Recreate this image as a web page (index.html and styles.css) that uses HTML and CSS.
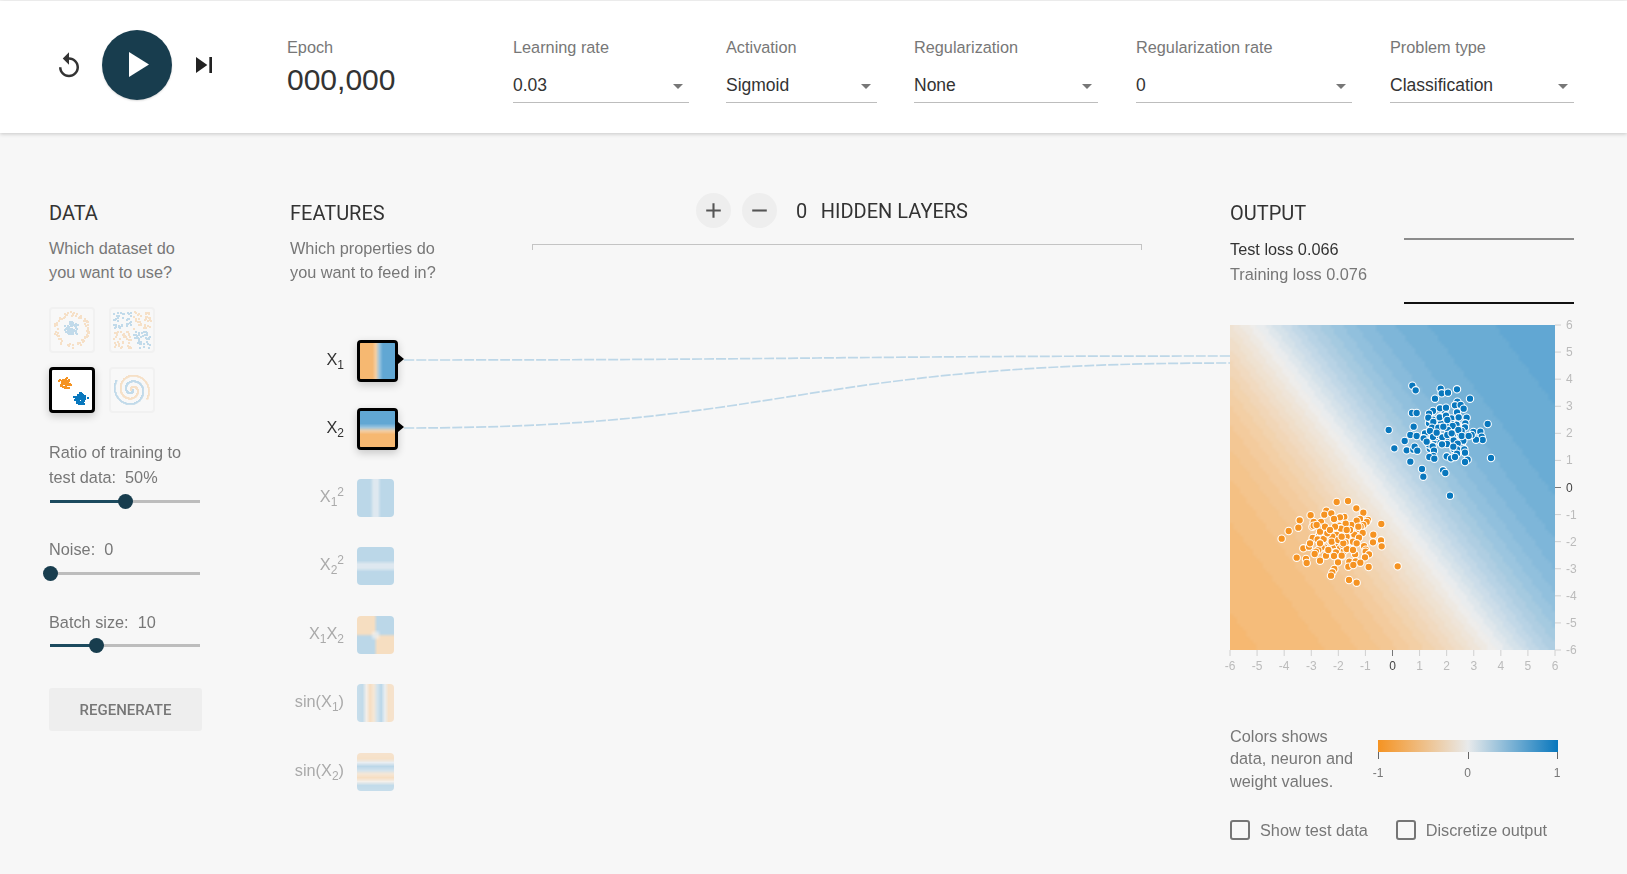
FILE: index.html
```html
<!DOCTYPE html>
<html lang="en">
<head>
    <meta charset="UTF-8">
    <title>Tensorflow Playground</title>
    <link rel="stylesheet" href="styles.css">
</head>
<body>
    <header class="top-bar">
        <svg class="icon-reset" viewBox="0 0 24 24"><path d="M12 5V1L7 6l5 5V7c3.31 0 6 2.69 6 6s-2.69 6-6 6-6-2.69-6-6H4c0 4.42 3.58 8 8 8s8-3.58 8-8-3.58-8-8-8z"/></svg>
        <div class="play-button">
            <svg viewBox="0 0 70 70"><path d="M27 22v25l20-12.500z"/></svg>
        </div>
        <svg class="icon-step" viewBox="0 0 24 24"><path d="M6 18l8.500-6L6 6v12zM16 6v12h2V6h-2z"/></svg>

        <div class="epoch">
            <div class="field-label">Epoch</div>
            <div class="epoch-value">000,000</div>
        </div>
        <div class="field field-rate">
            <div class="field-label">Learning rate</div>
            <div class="dropdown">0.03</div>
        </div>
        <div class="field field-activation">
            <div class="field-label">Activation</div>
            <div class="dropdown">Sigmoid</div>
        </div>
        <div class="field field-reg">
            <div class="field-label">Regularization</div>
            <div class="dropdown">None</div>
        </div>
        <div class="field field-regrate">
            <div class="field-label">Regularization rate</div>
            <div class="dropdown">0</div>
        </div>
        <div class="field field-problem">
            <div class="field-label">Problem type</div>
            <div class="dropdown">Classification</div>
        </div>
    </header>

    <main class="main">
        <svg class="links" width="1627" height="741" viewBox="0 133 1627 741">
            <path d="M404 360C817 360 817 356 1230 356"/>
            <path d="M404 428C790 428 790 363 1230 363"/>
        </svg>

        <section class="col-data">
            <h4 class="col-title">DATA</h4>
            <p class="col-desc">Which dataset do<br>you want to use?</p>
            <div class="thumbs">
                <canvas class="thumb" id="thumbCircle" width="42" height="42"></canvas>
                <canvas class="thumb" id="thumbXor" width="42" height="42"></canvas>
                <canvas class="thumb selected" id="thumbGauss" width="40" height="40"></canvas>
                <canvas class="thumb" id="thumbSpiral" width="42" height="42"></canvas>
            </div>
            <div class="ctrl ctrl-first">
                <div class="ctrl-label">Ratio of training to<br>test data:&nbsp; 50%</div>
                <div class="slider"><div class="slider-fill" style="width: 50.400%"></div><div class="slider-thumb"></div></div>
            </div>
            <div class="ctrl">
                <div class="ctrl-label">Noise:&nbsp; 0</div>
                <div class="slider"><div class="slider-fill" style="width: 0%"></div><div class="slider-thumb"></div></div>
            </div>
            <div class="ctrl ctrl-batch">
                <div class="ctrl-label">Batch size:&nbsp; 10</div>
                <div class="slider"><div class="slider-fill" style="width: 31%"></div><div class="slider-thumb"></div></div>
            </div>
            <button class="regenerate">REGENERATE</button>
        </section>

        <section class="col-features">
            <h4 class="col-title">FEATURES</h4>
            <p class="col-desc">Which properties do<br>you want to feed in?</p>
            <div class="features">
                <div class="feature active">
                    <div class="feature-label">X<sub>1</sub></div>
                    <div class="node"><canvas data-fn="x" width="10" height="10"></canvas></div>
                </div>
                <div class="feature active">
                    <div class="feature-label">X<sub>2</sub></div>
                    <div class="node"><canvas data-fn="y" width="10" height="10"></canvas></div>
                </div>
                <div class="feature">
                    <div class="feature-label">X<sub>1</sub><sup>2</sup></div>
                    <div class="node"><canvas data-fn="xx" width="10" height="10"></canvas></div>
                </div>
                <div class="feature">
                    <div class="feature-label">X<sub>2</sub><sup>2</sup></div>
                    <div class="node"><canvas data-fn="yy" width="10" height="10"></canvas></div>
                </div>
                <div class="feature">
                    <div class="feature-label">X<sub>1</sub>X<sub>2</sub></div>
                    <div class="node"><canvas data-fn="xy" width="10" height="10"></canvas></div>
                </div>
                <div class="feature">
                    <div class="feature-label">sin(X<sub>1</sub>)</div>
                    <div class="node"><canvas data-fn="sinx" width="10" height="10"></canvas></div>
                </div>
                <div class="feature">
                    <div class="feature-label">sin(X<sub>2</sub>)</div>
                    <div class="node"><canvas data-fn="siny" width="10" height="10"></canvas></div>
                </div>
            </div>
        </section>

        <section class="col-network">
            <div class="layers-row">
                <div class="round-button">
                    <svg viewBox="0 0 24 24"><path d="M19 13h-6v6h-2v-6H5v-2h6V5h2v6h6v2z"/></svg>
                </div>
                <div class="round-button">
                    <svg viewBox="0 0 24 24"><path d="M19 13H5v-2h14v2z"/></svg>
                </div>
                <span class="layers-count">0</span>
                <span class="layers-text">HIDDEN LAYERS</span>
            </div>
            <div class="bracket"></div>
        </section>

        <section class="col-output">
            <h4 class="col-title">OUTPUT</h4>
            <div class="loss-row">
                <div>
                    <div class="loss-test">Test loss 0.066</div>
                    <div class="loss-train">Training loss 0.076</div>
                </div>
                <div class="loss-chart">
                    <div class="loss-line-train"></div>
                    <div class="loss-line-test"></div>
                </div>
            </div>
            <div class="heatmap">
                <canvas id="heatCanvas" width="100" height="100"></canvas>
                <svg class="axes" id="axes" width="350" height="350"></svg>
                <svg class="points" id="points" width="325" height="325"></svg>
            </div>
            <div class="legend-row">
                <p class="legend-text">Colors shows<br>data, neuron and<br>weight values.</p>
                <div class="legend">
                    <div class="legend-bar"></div>
                    <div class="legend-ticks">
                        <div class="legend-tick"><span>-1</span></div>
                        <div class="legend-tick"><span>0</span></div>
                        <div class="legend-tick"><span>1</span></div>
                    </div>
                </div>
            </div>
            <div class="checks">
                <label class="check"><span class="check-box"></span>Show test data</label>
                <label class="check"><span class="check-box"></span>Discretize output</label>
            </div>
        </section>
    </main>

    <script src="script.js"></script>
</body>
</html>
```

FILE: styles.css
```css
* {
    box-sizing: border-box;
}
html, body {
    height: 100%;
}
body {
    margin: 0;
    padding-top: 1px;
    background-color: #F7F7F7;
    font-family: "Liberation Sans", Arial, sans-serif;
    font-size: 16.300px;
    color: #777777;
    overflow: hidden;
}
.top-bar {
    display: flex;
    align-items: flex-start;
    height: 132px;
    padding: 29px 0 0 54px;
    background-color: #FFFFFF;
    box-shadow: 0 1px 4px rgba(0, 0, 0, 0.2);
    position: relative;
}
.icon-reset {
    width: 30px;
    height: 30px;
    margin-top: 21px;
    fill: #333333;
}
.play-button {
    width: 70px;
    height: 70px;
    margin-left: 18px;
    border-radius: 50%;
    background-color: #183D4E;
    box-shadow: 0 1px 2px rgba(0, 0, 0, 0.15);
}
.play-button svg {
    display: block;
    fill: #FFFFFF;
}
.icon-step {
    width: 32px;
    height: 32px;
    margin: 19px 0 0 16px;
    fill: #222222;
}
.epoch {
    margin: 8px 0 0 67px;
    width: 226px;
}
.field-label {
    line-height: 18px;
    color: #777777;
}
.epoch-value {
    margin-top: 7px;
    font-size: 30px;
    line-height: 34px;
    color: #333333;
}
.field {
    margin-top: 8px;
}
.field-rate { width: 176px; }
.field-activation { width: 151px; margin-left: 37px; }
.field-reg { width: 184px; margin-left: 37px; }
.field-regrate { width: 216px; margin-left: 38px; }
.field-problem { width: 184px; margin-left: 38px; }
.dropdown {
    position: relative;
    margin-top: 14px;
    height: 33px;
    font-size: 17.500px;
    line-height: 30px;
    color: #333333;
    border-bottom: 1px solid #BDBDBD;
}
.dropdown::after {
    content: "";
    position: absolute;
    right: 6px;
    top: 14px;
    border-left: 5px solid transparent;
    border-right: 5px solid transparent;
    border-top: 5px solid #777777;
}

.main {
    position: relative;
    display: flex;
    align-items: flex-start;
    padding: 60px 0 0 49px;
}
.links {
    position: absolute;
    left: 0;
    top: 0;
    pointer-events: none;
}
.links path {
    fill: none;
    stroke: #BDD7E8;
    stroke-width: 1.700;
    stroke-dasharray: 10 2;
}
.col-data {
    width: 241px;
    padding-top: 8px;
}
.col-features {
    width: 242px;
    padding-top: 8px;
}
.col-network {
    width: 610px;
}
.col-output {
    width: 344px;
    margin-left: 88px;
    padding-top: 8px;
}
.col-title {
    margin: 0;
    font-family: Roboto, sans-serif;
    font-size: 20px;
    font-weight: 400;
    line-height: 24px;
    color: #333333;
}
.col-desc {
    margin: 12px 0 0;
    line-height: 23.500px;
}

.thumbs {
    display: grid;
    grid-template-columns: 46px 46px;
    gap: 14px;
    margin-top: 23px;
}
.thumb {
    display: block;
    width: 46px;
    height: 46px;
    background-color: #FFFFFF;
    border: 2px solid #DDDDDD;
    border-radius: 4px;
    opacity: 0.220;
}
.thumb.selected {
    opacity: 1;
    border: 3px solid #000000;
    box-shadow: 0 3px 8px rgba(0, 0, 0, 0.2);
}
.ctrl {
    width: 153px;
    margin-top: 25px;
}
.ctrl-first {
    margin-top: 27px;
}
.ctrl-batch {
    margin-top: 25.500px;
}
.ctrl-label {
    line-height: 25px;
}
.slider {
    position: relative;
    width: 150px;
    height: 22px;
    margin-left: 1px;
    background: linear-gradient(#BDBDBD, #BDBDBD) no-repeat 0 50% / 100% 3px;
}
.slider-fill {
    position: relative;
    height: 100%;
    background: linear-gradient(#1C4A5E, #1C4A5E) no-repeat 0 50% / 100% 3px;
}
.slider-thumb {
    position: absolute;
    top: 3.500px;
    width: 15px;
    height: 15px;
    margin-left: -7.500px;
    border-radius: 50%;
    background-color: #183D4E;
}
.slider-fill + .slider-thumb {
    left: 0;
}
.regenerate {
    display: block;
    width: 153px;
    height: 43px;
    margin-top: 31.500px;
    border: none;
    border-radius: 3px;
    background-color: #EEEEEE;
    font-family: Roboto, sans-serif;
    font-size: 15px;
    font-weight: 500;
    color: #777777;
}

.features {
    margin-top: 42.500px;
}
.feature {
    display: flex;
    align-items: center;
    gap: 13px;
    height: 68.500px;
    color: #AAAAAA;
}
.feature.active {
    color: #333333;
}
.feature-label {
    width: 54px;
    flex-shrink: 0;
    padding-bottom: 4px;
    text-align: right;
    white-space: nowrap;
    line-height: 20px;
}
.feature-label sub,
.feature-label sup {
    font-size: 12px;
    line-height: 0;
}
.node {
    position: relative;
    width: 37px;
    height: 38px;
}
.node canvas {
    display: block;
    width: 100%;
    height: 100%;
    border-radius: 4px;
    opacity: 0.400;
}
.feature.active .node {
    width: 41px;
    height: 42px;
    border: 3px solid #000000;
    border-radius: 4px;
    box-shadow: 0 3px 8px rgba(0, 0, 0, 0.2);
    background-color: #F7F7F7;
}
.feature.active .node canvas {
    opacity: 1;
    border-radius: 0;
}
.feature.active .node::after {
    content: "";
    position: absolute;
    left: 38px;
    top: 11px;
    border-top: 5px solid transparent;
    border-bottom: 5px solid transparent;
    border-left: 6px solid #000000;
}

.layers-row {
    display: flex;
    align-items: center;
    height: 35px;
    padding-left: 164px;
    font-family: Roboto, sans-serif;
    font-size: 20px;
    color: #333333;
}
.round-button {
    width: 35px;
    height: 35px;
    margin-right: 11px;
    padding: 5px;
    border-radius: 50%;
    background-color: #EEEEEE;
}
.round-button svg {
    display: block;
    fill: #555555;
}
.layers-count {
    margin-left: 8px;
}
.layers-text {
    margin-left: 13.500px;
}
.bracket {
    height: 6px;
    margin-top: 16px;
    border: 1px solid #C4C4C4;
    border-bottom: none;
}

.loss-row {
    display: flex;
    justify-content: space-between;
    margin-top: 11.500px;
    line-height: 25px;
}
.loss-test {
    color: #333333;
}
.loss-chart {
    display: flex;
    flex-direction: column;
    justify-content: space-between;
    width: 170px;
    height: 66px;
    margin-top: 1px;
}
.loss-line-train {
    height: 2px;
    background-color: #8C8C8C;
}
.loss-line-test {
    height: 2px;
    background-color: #111111;
}
.heatmap {
    position: relative;
    width: 325px;
    height: 325px;
    margin-top: 21px;
}
.heatmap canvas {
    display: block;
    width: 325px;
    height: 325px;
}
.axes,
.points {
    position: absolute;
    left: 0;
    top: 0;
    overflow: visible;
}
.axes text {
    font-size: 12px;
    fill: #BBBBBB;
}
.axes text.zero {
    fill: #444444;
}
.axes line {
    stroke: #D0D0D0;
}
.axes line.zero {
    stroke: #777777;
}
.legend-row {
    display: flex;
    margin-top: 75px;
}
.legend-text {
    width: 148px;
    margin: 0;
    line-height: 22.500px;
}
.legend {
    width: 180px;
    margin-top: 15px;
}
.legend-bar {
    height: 12px;
    background: linear-gradient(to right, #F59322, #E8EAEB 50%, #0877BD);
}
.legend-ticks {
    display: flex;
    justify-content: space-between;
}
.legend-tick {
    position: relative;
    width: 1px;
    height: 7px;
    background-color: #666666;
}
.legend-tick span {
    position: absolute;
    top: 14px;
    left: 0;
    transform: translateX(-50%);
    font-size: 12px;
    line-height: 14px;
    color: #777777;
}
.checks {
    display: flex;
    gap: 28px;
    margin-top: 27.500px;
}
.check {
    display: flex;
    align-items: center;
    gap: 10px;
    line-height: 20px;
}
.check-box {
    width: 20px;
    height: 20px;
    border: 2px solid #757575;
    border-radius: 3px;
}
```

FILE: script.js
```js
// Cores da escala -1 / 0 / 1
var ORANGE = [245, 147, 34];
var MID = [232, 234, 235];
var BLUE = [8, 119, 189];
var SHADES = 30;

function colorFor(v) {
    v = Math.max(-1, Math.min(1, v));
    // escala em faixas, igual ao desenho original
    v = (Math.round((v + 1) / 2 * (SHADES - 1)) / (SHADES - 1)) * 2 - 1;
    var from = v < 0 ? ORANGE : BLUE;
    var t = Math.abs(v);
    return [
        MID[0] + (from[0] - MID[0]) * t,
        MID[1] + (from[1] - MID[1]) * t,
        MID[2] + (from[2] - MID[2]) * t
    ];
}

function paint(canvas, fn) {
    var ctx = canvas.getContext('2d');
    var w = canvas.width, h = canvas.height;
    var img = ctx.createImageData(w, h);
    for (var j = 0; j < h; j++) {
        for (var i = 0; i < w; i++) {
            var x = (i + 0.5) / w * 12 - 6;
            var y = 6 - (j + 0.5) / h * 12;
            var c = colorFor(fn(x, y));
            var p = (j * w + i) * 4;
            img.data[p] = c[0];
            img.data[p + 1] = c[1];
            img.data[p + 2] = c[2];
            img.data[p + 3] = 160;
        }
    }
    ctx.putImageData(img, 0, 0);
}

var features = {
    x: function(x) { return x; },
    y: function(x, y) { return y; },
    xx: function(x) { return x * x; },
    yy: function(x, y) { return y * y; },
    xy: function(x, y) { return x * y; },
    sinx: function(x) { return Math.sin(x); },
    siny: function(x, y) { return Math.sin(y); }
};
document.querySelectorAll('.node canvas').forEach(function(c) {
    paint(c, features[c.dataset.fn]);
});

// Mapa de saida: fronteira diagonal, satura devagar
paint(document.getElementById('heatCanvas'), function(x, y) {
    var d = (x * 0.803 + y * 0.596 + 0.47) / 12 * 325;
    return Math.tanh(d / 95);
});

// Eixos
var SVGNS = 'http://www.w3.org/2000/svg';
function add(parent, name, attrs, text) {
    var el = document.createElementNS(SVGNS, name);
    for (var k in attrs) el.setAttribute(k, attrs[k]);
    if (text !== undefined) el.textContent = text;
    parent.appendChild(el);
    return el;
}
var axes = document.getElementById('axes');
for (var v = -6; v <= 6; v++) {
    var pos = (v + 6) * 325 / 12;
    var cls = v === 0 ? 'zero' : '';
    add(axes, 'line', { x1: pos, x2: pos, y1: 325, y2: 331, 'class': cls });
    add(axes, 'line', { x1: 325, x2: 331, y1: 325 - pos, y2: 325 - pos, 'class': cls });
    add(axes, 'text', { x: pos, y: 345, 'text-anchor': 'middle', 'class': cls }, v);
    add(axes, 'text', { x: 336, y: 325 - pos + 4, 'class': cls }, v);
}

var seed = 7;
function rnd() {
    seed = (seed * 16807) % 2147483647;
    return seed / 2147483647;
}
function gaussRnd() {
    return (rnd() + rnd() + rnd() - 1.5) / 1.5;
}

// Pontos do conjunto de dados, em coordenadas da imagem ampliada 3x
var bluePoints = [[607,227],[617,241],[692,236],[695,250],[714,248],[741,238],[675,266],[780,266],[742,275],[735,286],[752,285],[761,296],[690,295],[708,293],[669,303],[657,311],[655,323],[606,309],[620,309],[741,307],[746,322],[770,323],[689,322],[708,317],[712,330],[670,336],[728,348],[766,340],[765,352],[833,342],[611,350],[536,360],[666,353],[694,351],[714,360],[685,353],[645,370],[660,363],[755,363],[790,366],[811,365],[601,375],[620,378],[641,385],[697,382],[669,381],[712,375],[815,380],[818,390],[798,389],[760,392],[731,391],[584,393],[711,402],[696,403],[743,401],[656,403],[668,409],[553,415],[590,421],[610,419],[614,410],[622,422],[741,418],[763,418],[765,428],[672,422],[741,431],[670,438],[658,441],[673,446],[710,439],[723,445],[735,441],[773,449],[765,456],[843,444],[601,455],[636,477],[640,500],[699,481],[706,489],[720,557],[785,375],[745,360],[725,370],[680,368],[700,350],[650,395],[730,410],[755,378],[776,378]];
var orangePoints = [[380,576],[414,573],[349,602],[343,614],[364,610],[439,595],[460,608],[474,630],[470,636],[403,621],[390,622],[372,627],[450,627],[440,632],[269,631],[265,653],[311,636],[311,647],[333,636],[334,653],[320,645],[424,645],[407,641],[460,645],[452,650],[514,642],[236,663],[215,686],[393,656],[330,665],[458,669],[433,674],[490,674],[410,680],[380,675],[367,680],[308,684],[323,688],[341,687],[447,683],[407,697],[429,695],[365,695],[352,670],[513,691],[489,697],[515,709],[280,715],[297,710],[335,712],[325,720],[318,725],[410,717],[429,720],[378,727],[467,725],[477,733],[314,732],[348,737],[395,737],[372,738],[465,742],[260,743],[288,747],[290,759],[330,752],[384,757],[418,755],[437,754],[451,758],[415,770],[430,765],[476,771],[373,777],[367,787],[363,797],[563,769],[417,810],[440,818],[385,690],[345,650],[400,700],[440,700],[420,660],[375,650],[300,700],[355,720],[395,680],[445,650],[360,660],[330,700],[410,660]];
var pointsSvg = document.getElementById('points');
function drawPoint(x, y, color) {
    add(pointsSvg, 'circle', {
        cx: (x - 60) / 3,
        cy: (y - 45) / 3,
        r: 3.7,
        fill: color,
        stroke: '#FFFFFF',
        'stroke-width': 1.1
    });
}
function drawPoints(list, color, cx, cy, rx, ry) {
    // miolo mais denso do aglomerado, por baixo dos pontos medidos
    for (var i = 0; i < 40; i++) {
        drawPoint(cx + gaussRnd() * rx, cy + gaussRnd() * ry, color);
    }
    list.forEach(function(p) {
        drawPoint(p[0], p[1], color);
    });
}
drawPoints(orangePoints, '#F59322', 385, 685, 100, 80);
drawPoints(bluePoints, '#0877BD', 705, 365, 90, 80);

// Miniaturas dos conjuntos de dados
function dots(id, size, draw) {
    var ctx = document.getElementById(id).getContext('2d');
    draw(function(x, y, color) {
        ctx.fillStyle = color;
        ctx.fillRect(Math.round(x), Math.round(y), size, size);
    });
}
var THUMB_ORANGE = '#F59322', THUMB_BLUE = '#0877BD';

dots('thumbCircle', 2, function(dot) {
    for (var i = 0; i < 70; i++) {
        var a = rnd() * 6.283, r = rnd() * 8;
        dot(20 + r * Math.cos(a), 20 + r * Math.sin(a), THUMB_BLUE);
    }
    for (var k = 0; k < 80; k++) {
        var b = rnd() * 6.283, s = 14 + rnd() * 4;
        dot(20 + s * Math.cos(b), 20 + s * Math.sin(b), THUMB_ORANGE);
    }
});
dots('thumbXor', 2, function(dot) {
    for (var i = 0; i < 190; i++) {
        var x = 2 + rnd() * 37, y = 2 + rnd() * 37;
        if (Math.abs(x - 20.5) < 1 || Math.abs(y - 20.5) < 1) continue;
        dot(x, y, (x - 20.5) * (y - 20.5) > 0 ? THUMB_BLUE : THUMB_ORANGE);
    }
});
dots('thumbGauss', 2, function(dot) {
    for (var i = 0; i < 70; i++) {
        dot(13 + gaussRnd() * 8, 12 + gaussRnd() * 8, THUMB_ORANGE);
        dot(28 + gaussRnd() * 8, 27 + gaussRnd() * 8, THUMB_BLUE);
    }
});
dots('thumbSpiral', 1.500, function(dot) {
    for (var i = 0; i < 300; i++) {
        var t = i / 300, r = t * 18, a = t * 10;
        dot(20 + r * Math.cos(a), 20 + r * Math.sin(a), THUMB_BLUE);
        dot(20 - r * Math.cos(a), 20 - r * Math.sin(a), THUMB_ORANGE);
    }
});

// Posiciona o botao de cada slider no fim da parte preenchida
document.querySelectorAll('.slider').forEach(function(s) {
    s.querySelector('.slider-thumb').style.left = s.querySelector('.slider-fill').style.width;
});
```
